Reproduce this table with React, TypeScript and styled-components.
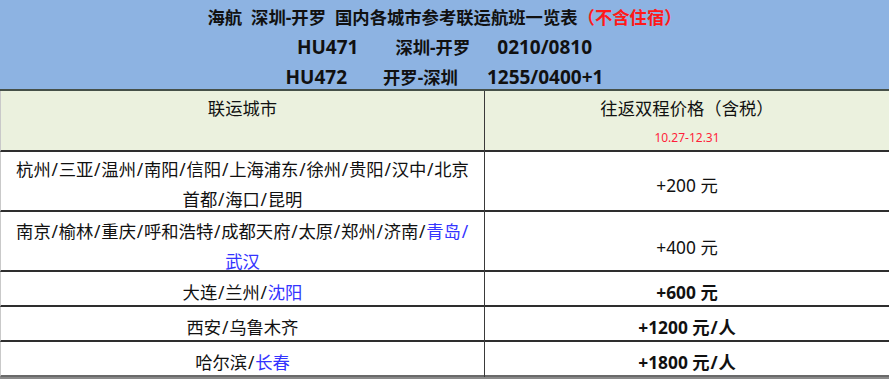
import React from "react";
import styled, { createGlobalStyle } from "styled-components";

const Global = createGlobalStyle`
  html, body { margin: 0; padding: 0; background: #ffffff; }
  body { font-family: "Noto Sans", "Noto Sans CJK SC", sans-serif; color: #111; }
`;

const Sheet = styled.div`
  width: 889px;
  height: 379px;
  overflow: hidden;
  background: #8a8a8a;
`;

const TitleBlock = styled.div`
  height: 91px;
  box-sizing: border-box;
  background: #8db3e2;
  border-bottom: 2px solid #465048;
  padding-top: 2px;
  font-weight: 700;
  font-size: 17.33px;
  color: #111;
`;

const TitleLine = styled.div`
  height: 30px;
  line-height: 30px;
  display: flex;
  justify-content: center;
  align-items: baseline;
  white-space: pre;
`;

const Seg = styled.span<{ $gap?: number; $latin?: boolean }>`
  margin-left: ${(p) => p.$gap ?? 0}px;
  font-size: ${(p) => (p.$latin ? "19px" : "inherit")};
`;

const Red = styled.span`
  color: #ff1a1a;
`;

const Blue = styled.span`
  color: #3434ff;
`;

const Slash = styled.span`
  margin: 0 0.75px;
`;

const Row = styled.div<{ $h: number; $bg?: string; $border?: string }>`
  display: grid;
  grid-template-columns: 484px 1fr;
  height: ${(p) => p.$h}px;
  box-sizing: border-box;
  background: ${(p) => p.$bg ?? "#ffffff"};
  border-bottom: 2px solid ${(p) => p.$border ?? "#2e2e2e"};
  border-left: 1px solid #c9c9c9;
`;

const Cell = styled.div<{ $pad?: number; $bold?: boolean; $top?: boolean; $divider?: boolean }>`
  display: flex;
  flex-direction: column;
  align-items: center;
  justify-content: ${(p) => (p.$top ? "flex-start" : "center")};
  padding-top: ${(p) => p.$pad ?? 0}px;
  box-sizing: border-box;
  font-size: 17.33px;
  line-height: 30px;
  font-weight: ${(p) => (p.$bold ? 700 : 400)};
  text-align: center;
  border-right: ${(p) => (p.$divider ? "1px solid #3a3a3a" : "none")};
  white-space: nowrap;
`;

const DateNote = styled.div`
  font-size: 12px;
  line-height: 30px;
  color: #ff1f3a;
`;

function Cities({ text }: { text: string }) {
  const parts = text.split("/");
  return (
    <>
      {parts.map((p, i) => (
        <React.Fragment key={i}>
          {p}
          {i < parts.length - 1 && <Slash>/</Slash>}
        </React.Fragment>
      ))}
    </>
  );
}

export default function App() {
  return (
    <>
      <Global />
      <Sheet>
        <TitleBlock>
          <TitleLine>
            海航&nbsp;&nbsp;深圳-开罗&nbsp;&nbsp;国内各城市参考联运航班一览表<Red>（不含住宿）</Red>
          </TitleLine>
          <TitleLine>
            <Seg $latin>HU471</Seg>
            <Seg $gap={37}>深圳-开罗</Seg>
            <Seg $gap={27} $latin>0210/0810</Seg>
          </TitleLine>
          <TitleLine>
            <Seg $latin>HU472</Seg>
            <Seg $gap={36}>开罗-深圳</Seg>
            <Seg $gap={29} $latin>1255/0400+1</Seg>
          </TitleLine>
        </TitleBlock>

        <Row $h={61} $bg="#ebf1de">
          <Cell $top $pad={2} $divider>联运城市</Cell>
          <Cell $top $pad={2}>
            <div>往返双程价格（含税）</div>
            <DateNote>10.27-12.31</DateNote>
          </Cell>
        </Row>

        <Row $h={60}>
          <Cell $pad={2} $divider>
            <div>
              <Cities text="杭州/三亚/温州/南阳/信阳/上海浦东/徐州/贵阳/汉中/北京" />
            </div>
            <div>
              <Cities text="首都/海口/昆明" />
            </div>
          </Cell>
          <Cell $pad={4}>+200 元</Cell>
        </Row>

        <Row $h={60}>
          <Cell $pad={4} $divider>
            <div>
              <Cities text="南京/榆林/重庆/呼和浩特/成都天府/太原/郑州/济南/" />
              <Blue>
                <Cities text="青岛/" />
              </Blue>
            </div>
            <div>
              <Blue>武汉</Blue>
            </div>
          </Cell>
          <Cell $pad={5}>+400 元</Cell>
        </Row>

        <Row $h={35}>
          <Cell $pad={5} $divider>
            <div>
              <Cities text="大连/兰州/" />
              <Blue>沈阳</Blue>
            </div>
          </Cell>
          <Cell $pad={5} $bold>+600 元</Cell>
        </Row>

        <Row $h={35}>
          <Cell $pad={5} $divider>
            <div>
              <Cities text="西安/乌鲁木齐" />
            </div>
          </Cell>
          <Cell $pad={5} $bold>
            <div>
              +1200 元<Slash>/</Slash>人
            </div>
          </Cell>
        </Row>

        <Row $h={35} $border="#6a6a6a">
          <Cell $pad={5} $divider>
            <div>
              <Cities text="哈尔滨/" />
              <Blue>长春</Blue>
            </div>
          </Cell>
          <Cell $pad={5} $bold>
            <div>
              +1800 元<Slash>/</Slash>人
            </div>
          </Cell>
        </Row>
      </Sheet>
    </>
  );
}
